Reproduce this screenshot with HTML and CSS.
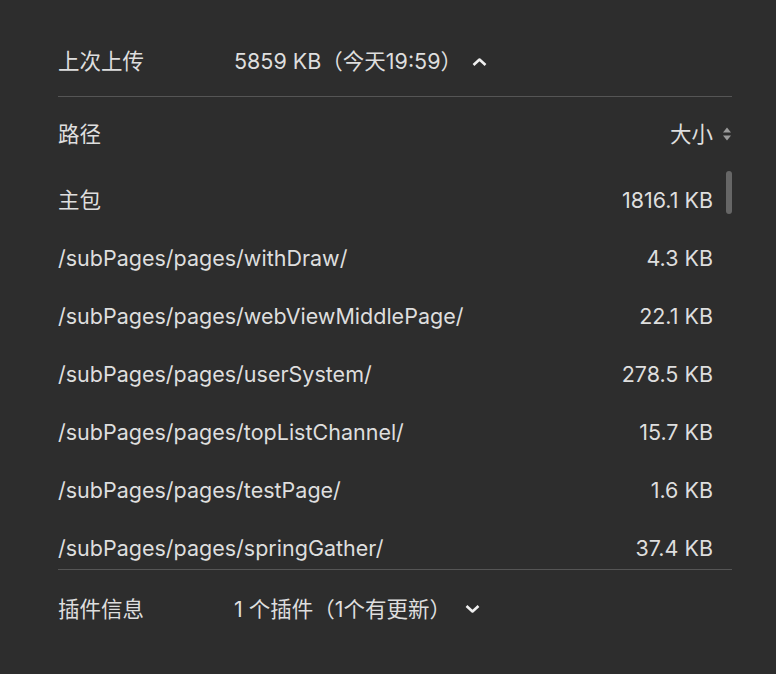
FILE: index.html
```html
<!DOCTYPE html>
<html lang="zh-CN">
<head>
    <meta charset="UTF-8">
    <meta name="viewport" content="width=device-width, initial-scale=1.0">
    <title>版本信息</title>
    <link rel="stylesheet" href="styles.css">
</head>
<body>
    <div class="panel">
        <div class="info-row top-row">
            <span class="info-label">上次上传</span>
            <span class="info-value">5859 KB（今天19:59）
                <svg class="chevron" width="15" height="10" viewBox="0 0 15 10"><path d="M1.5 8 L7.5 2.5 L13.5 8" fill="none" stroke="#f0f0f0" stroke-width="2.6" stroke-linejoin="round"/></svg>
            </span>
        </div>

        <div class="pkg-table">
            <div class="pkg-head">
                <span>路径</span>
                <span class="sort">大小
                    <svg width="10" height="16" viewBox="0 0 10 16"><path d="M5 1.5 L9 6.5 H1 Z M5 14.5 L9 9.5 H1 Z" fill="#9a9a9a"/></svg>
                </span>
            </div>
            <div class="pkg-scroll">
                <ul class="pkg-list">
                    <li><span>主包</span><span>1816.1 KB</span></li>
                    <li><span>/subPages/pages/withDraw/</span><span>4.3 KB</span></li>
                    <li><span>/subPages/pages/webViewMiddlePage/</span><span>22.1 KB</span></li>
                    <li><span>/subPages/pages/userSystem/</span><span>278.5 KB</span></li>
                    <li><span>/subPages/pages/topListChannel/</span><span>15.7 KB</span></li>
                    <li><span>/subPages/pages/testPage/</span><span>1.6 KB</span></li>
                    <li><span>/subPages/pages/springGather/</span><span>37.4 KB</span></li>
                </ul>
                <div class="scroll-thumb"></div>
            </div>
        </div>

        <div class="info-row">
            <span class="info-label">插件信息</span>
            <span class="info-value plugin">1 个插件（1个有更新）
                <svg class="chevron" width="15" height="10" viewBox="0 0 15 10"><path d="M1.5 2 L7.5 7.5 L13.5 2" fill="none" stroke="#f0f0f0" stroke-width="2.6" stroke-linejoin="round"/></svg>
            </span>
        </div>

        <div class="info-row last-row">
            <span class="info-label">线上最低基础库</span>
            <span class="info-value">未设置</span>
            <a class="info-link" href="#">查看用户基础库分布</a>
        </div>
    </div>
</body>
</html>
```

FILE: styles.css
```css
*,
*::after,
*::before{
    padding: 0;
    margin: 0;
    box-sizing: border-box;
}
html{
    font: normal 21.5px/1.5 Inter, "Noto Sans CJK SC", sans-serif;
    background: #2d2d2d;
    color: #dedede;
}
body{
    overflow: hidden;
    height: 674px;
}
.panel{
    margin-left: 58px;
    width: 674px;
}
.info-row{
    display: flex;
    align-items: center;
    height: 78px;
}
.top-row{
    height: 97px;
    padding-top: 27px;
    border-bottom: 1px solid #555;
}
.last-row{
    height: 74px;
}
.info-label{
    width: 176px;
    flex-shrink: 0;
}
.info-value{
    display: flex;
    align-items: center;
    gap: 6px;
}
.chevron{
    margin-left: 4px;
}
.plugin .chevron{
    margin-left: 8px;
}
.info-link{
    margin-left: auto;
    margin-right: 4px;
    color: #4a9fe6;
    text-decoration: none;
}
.pkg-table{
    border-bottom: 1px solid #555;
}
.pkg-head{
    display: flex;
    justify-content: space-between;
    align-items: center;
    height: 74px;
}
.sort{
    display: flex;
    align-items: center;
    gap: 9px;
}
.pkg-scroll{
    position: relative;
    height: 398px;
    overflow: hidden;
}
.pkg-list{
    list-style: none;
    padding-right: 19px;
}
.pkg-list li{
    display: flex;
    justify-content: space-between;
    align-items: center;
    height: 58px;
}
.scroll-thumb{
    position: absolute;
    right: 0;
    top: 0;
    width: 6px;
    height: 43px;
    border-radius: 3px;
    background: #666;
}
```
